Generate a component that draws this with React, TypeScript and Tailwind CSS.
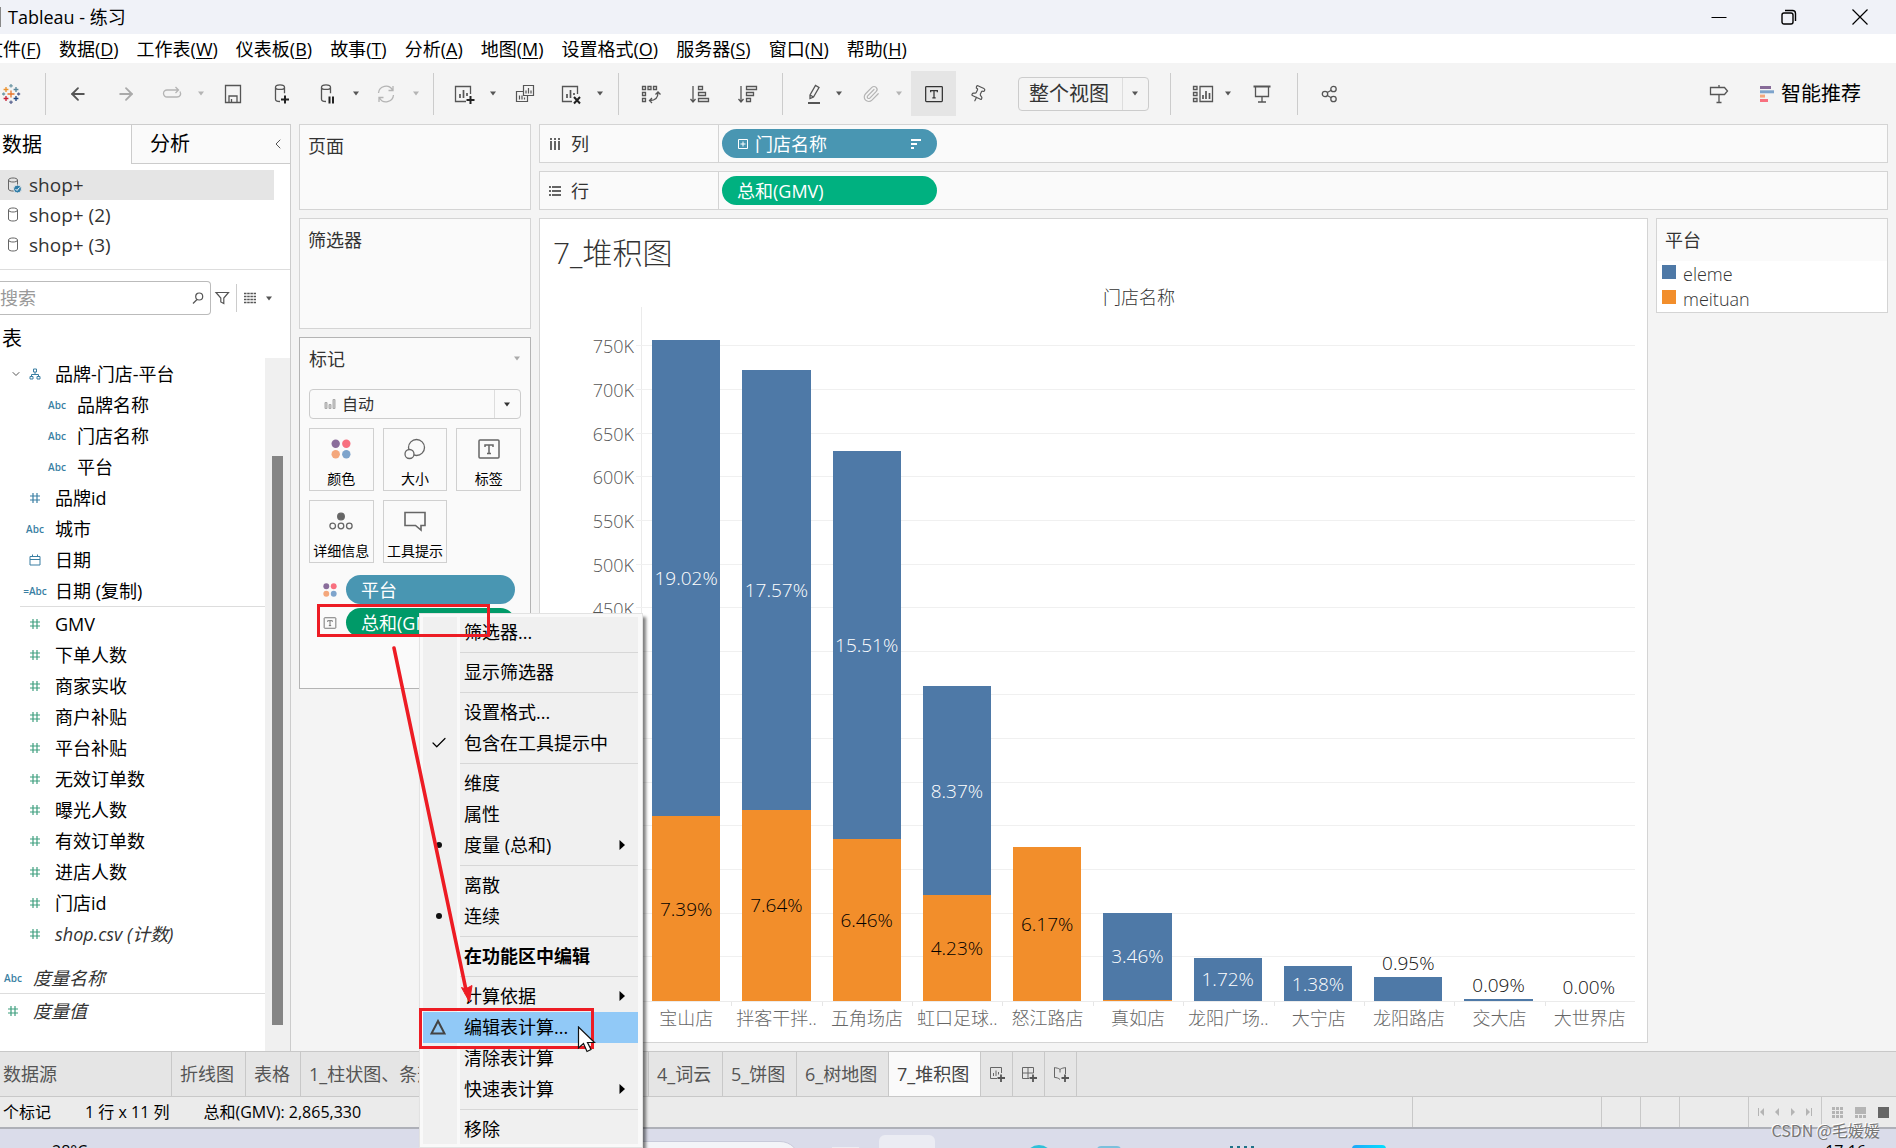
import type { ReactNode } from 'react';
import { ArrowLeft, ArrowRight, Check, ChevronDown, ChevronLeft, Paperclip, Pin } from 'lucide-react';

const BLUE = '#4e79a7';
const ORANGE = '#f28e2b';

/* ---------- data ---------- */

const MENUS = [
    ['文件', 'F'], ['数据', 'D'], ['工作表', 'W'], ['仪表板', 'B'], ['故事', 'T'], ['分析', 'A'],
    ['地图', 'M'], ['设置格式', 'O'], ['服务器', 'S'], ['窗口', 'N'], ['帮助', 'H'],
];

const DIMENSIONS = [
    { icon: 'abc', name: '品牌名称', nested: true },
    { icon: 'abc', name: '门店名称', nested: true },
    { icon: 'abc', name: '平台', nested: true },
    { icon: 'hash', name: '品牌id' },
    { icon: 'abc', name: '城市' },
    { icon: 'date', name: '日期' },
    { icon: 'calc', name: '日期 (复制)' },
];

const MEASURES = [
    'GMV', '下单人数', '商家实收', '商户补贴', '平台补贴', '无效订单数', '曝光人数', '有效订单数', '进店人数', '门店id',
];

// share of total GMV per store, in percent
const STORES = [
    { name: '宝山店', eleme: 19.02, meituan: 7.39 },
    { name: '拌客干拌..', eleme: 17.57, meituan: 7.64 },
    { name: '五角场店', eleme: 15.51, meituan: 6.46 },
    { name: '虹口足球..', eleme: 8.37, meituan: 4.23 },
    { name: '怒江路店', eleme: 0, meituan: 6.17 },
    { name: '真如店', eleme: 3.46, meituan: 0.05 },
    { name: '龙阳广场..', eleme: 1.72, meituan: 0 },
    { name: '大宁店', eleme: 1.38, meituan: 0 },
    { name: '龙阳路店', eleme: 0.95, meituan: 0 },
    { name: '交大店', eleme: 0.09, meituan: 0 },
    { name: '大世界店', eleme: 0, meituan: 0 },
];

const AXIS_MAX = 795; // thousands
const TOTAL = 2865.33;
const TICKS = [50, 100, 150, 200, 250, 300, 350, 400, 450, 500, 550, 600, 650, 700, 750];

const toHeight = (pct: number) => `${((pct / 100) * TOTAL * 100) / AXIS_MAX}%`;

type MenuRow = { label: string; mark?: 'check' | 'dot' | 'delta'; sub?: boolean; bold?: boolean; active?: boolean };

const CONTEXT_MENU: MenuRow[][] = [
    [{ label: '筛选器...' }],
    [{ label: '显示筛选器' }],
    [{ label: '设置格式...' }, { label: '包含在工具提示中', mark: 'check' }],
    [{ label: '维度' }, { label: '属性' }, { label: '度量 (总和)', mark: 'dot', sub: true }],
    [{ label: '离散' }, { label: '连续', mark: 'dot' }],
    [{ label: '在功能区中编辑', bold: true }],
    [
        { label: '计算依据', sub: true },
        { label: '编辑表计算...', mark: 'delta', active: true },
        { label: '清除表计算' },
        { label: '快速表计算', sub: true },
    ],
    [{ label: '移除' }],
];

/* ---------- icons ---------- */

function Caret({ className = '' }: { className?: string }) {
    return (
        <svg viewBox="0 0 8 5" className={`w-2 h-[5px] shrink-0 ${className}`}>
            <path d="M1 0.5h6L4 4.5z" fill="currentColor" />
        </svg>
    );
}

function Glyph({ children, className = '' }: { children: ReactNode; className?: string }) {
    return (
        <svg viewBox="0 0 24 24" fill="none" stroke="currentColor" strokeWidth="1.3" className={`w-6 h-6 shrink-0 ${className}`}>
            {children}
        </svg>
    );
}

function Logo() {
    const plus = (x: number, y: number, r: number, color: string) => (
        <path key={`${x}-${y}`} d={`M${x - r} ${y}h${2 * r}M${x} ${y - r}v${2 * r}`} stroke={color} />
    );
    return (
        <Glyph>
            {plus(12, 12, 3.5, '#e8762b')}
            {plus(7, 7.5, 2.4, '#eb912c')}
            {plus(17, 7.5, 2.4, '#59879b')}
            {plus(7, 16.5, 2.4, '#c72035')}
            {plus(17, 16.5, 2.4, '#1f447e')}
            {plus(12, 3.8, 1.8, '#7099a6')}
            {plus(12, 20.2, 1.8, '#5b6591')}
            {plus(4.6, 12, 1.6, '#7099a6')}
            {plus(19.6, 12, 1.6, '#5b6591')}
        </Glyph>
    );
}

function HashIcon({ className = '' }: { className?: string }) {
    return (
        <svg viewBox="0 0 12 12" fill="none" stroke="currentColor" strokeWidth="1.2" className={`w-3 h-3 ${className}`}>
            <path d="M4 1v10M8 1v10M1 4h10M1 8h10" />
        </svg>
    );
}

function Cylinder() {
    return <path d="M6.500 5.200c0-3 9-3 9 0s-9 3-9 0v12c0 1.500 2 2.300 4.500 2.300M15.500 5.200v6" />;
}

function DataSourceIcon({ active }: { active?: boolean }) {
    return (
        <svg viewBox="0 0 16 18" fill="none" stroke="#666" className="w-4 h-[18px] shrink-0">
            <path d="M2.500 4c0-2.700 9-2.700 9 0s-9 2.700-9 0v9c0 2.700 9 2.700 9 0V4" />
            {active && (
                <>
                    <circle cx="11.500" cy="13" r="4" fill="#2f7da8" stroke="#e5e5e5" />
                    <path d="M9.500 13l1.500 1.500 2.500-3" stroke="#fff" />
                </>
            )}
        </svg>
    );
}

function ColorDots({ className = '' }: { className?: string }) {
    return (
        <svg viewBox="0 0 20 20" className={className}>
            <circle cx="4.700" cy="4.700" r="4.200" fill="#8a6d9b" />
            <circle cx="15.300" cy="4.700" r="4.200" fill="#f8707f" />
            <circle cx="4.700" cy="15.300" r="4.200" fill="#f4a77c" />
            <circle cx="15.300" cy="15.300" r="4.200" fill="#7ea4cc" />
        </svg>
    );
}

function LabelIcon({ className = '' }: { className?: string }) {
    return (
        <svg viewBox="0 0 24 24" fill="none" stroke="currentColor" strokeWidth="1.500" className={className}>
            <rect x="2" y="3" width="20" height="18" rx="1" />
            <path d="M8 10V8h8v2M12 8v8.500M10 16.500h4" />
        </svg>
    );
}

/* ---------- top bars ---------- */

function TitleBar() {
    return (
        <header className="h-[34px] shrink-0 bg-[#f0f2f8] flex items-center justify-between text-lg text-black">
            <div className="flex items-center gap-[7px]">
                <span className="w-px h-5 bg-[#888]" />
                <h1>Tableau - 练习</h1>
            </div>
            <div className="flex h-full">
                <button aria-label="最小化" className="w-[70px] flex items-center justify-center">
                    <svg viewBox="0 0 16 16" className="w-4 h-4" stroke="#000"><path d="M0.500 8.500h15" /></svg>
                </button>
                <button aria-label="还原" className="w-[70px] flex items-center justify-center">
                    <svg viewBox="0 0 16 16" className="w-4 h-4" fill="none" stroke="#000" strokeWidth="1.400">
                        <rect x="1" y="4" width="11" height="11" rx="2" />
                        <path d="M4 1.500h7.500a3 3 0 0 1 3 3V12" />
                    </svg>
                </button>
                <button aria-label="关闭" className="w-[72px] flex items-center justify-center">
                    <svg viewBox="0 0 16 16" className="w-4 h-4" stroke="#000" strokeWidth="1.200"><path d="M0.500 0.500l15 15M15.500 0.500l-15 15" /></svg>
                </button>
            </div>
        </header>
    );
}

function MenuBar() {
    return (
        <nav className="h-[29px] shrink-0 bg-white overflow-hidden">
            <ul className="flex items-center gap-[18px] h-full -ml-[15px] text-lg text-black whitespace-nowrap">
                {MENUS.map(([name, key]) => (
                    <li key={key}>
                        <button>
                            {name}(<u className="underline-offset-2">{key}</u>)
                        </button>
                    </li>
                ))}
            </ul>
        </nav>
    );
}

const Sep = ({ className }: { className: string }) => <span className={`w-px h-[42px] shrink-0 bg-[#ccc] ${className}`} />;

function Tool({ label, className = '', children }: { label: string; className?: string; children: ReactNode }) {
    return <button aria-label={label} className={`shrink-0 ${className}`}>{children}</button>;
}

function Toolbar() {
    return (
        <div className="h-[61px] shrink-0 flex items-center text-[#555]">
            <Tool label="开始页面" className="-ml-px"><Logo /></Tool>
            <Sep className="ml-[22px]" />
            <Tool label="撤消" className="ml-5"><ArrowLeft className="w-6 h-5" strokeWidth={2.2} /></Tool>
            <Tool label="重做" className="ml-6 text-[#aaa]"><ArrowRight className="w-6 h-5" strokeWidth={2.2} /></Tool>
            <Tool label="重复" className="ml-[22px] text-[#b4b4b4]">
                <Glyph><path d="M9 15H7a3.500 3.500 0 0 1 0-7h11M15.500 5l3 3-3 3M20 9.500c1.500 3 0 5.500-3 5.500H9" /></Glyph>
            </Tool>
            <Caret className="ml-[13px] text-[#b4b4b4]" />
            <Tool label="保存" className="ml-4">
                <Glyph><path d="M4.500 3.500h15v17h-15zM8 20v-6h8v6M10.500 17v3" /></Glyph>
            </Tool>
            <Tool label="新建数据源" className="ml-6">
                <Glyph><Cylinder /><path d="M12 17.500h8M16 13.500v8" stroke="#222" strokeWidth="2" /></Glyph>
            </Tool>
            <Tool label="暂停自动更新" className="ml-[22px]">
                <Glyph><Cylinder /><path d="M14.500 14.500v7M18 14.500v7" stroke="#222" strokeWidth="2" /></Glyph>
            </Tool>
            <Caret className="ml-[13px]" />
            <Tool label="刷新" className="ml-3.5 text-[#b4b4b4]">
                <Glyph><path d="M4.500 11a7.500 7.500 0 0 1 14-3M19.500 13a7.500 7.500 0 0 1-14 3M19 4v4.500h-4.500M5 20v-4.500h4.500" /></Glyph>
            </Tool>
            <Caret className="ml-3.5 text-[#b4b4b4]" />
            <Sep className="ml-[13px]" />
            <Tool label="新建工作表" className="ml-[18px]">
                <Glyph><path d="M18.500 12V4.500h-15v15H14" /><path d="M8 16v-4M11.500 16V8M15 14v-3" strokeWidth="1.700" /><path d="M14.500 18h8M18.500 14v8" stroke="#222" strokeWidth="2" /></Glyph>
            </Tool>
            <Caret className="ml-[13px]" />
            <Tool label="复制工作表" className="ml-4">
                <Glyph><path d="M10.500 3.500h10v10h-10zM10 9.500H3.500v10h11V14M13 11.500v-3M15.500 11.500V6M18 11.500v-3M6.500 17.500v-4M9 17.500v-4M11.500 17.500v-2" strokeWidth="1.200" /></Glyph>
            </Tool>
            <Tool label="清除工作表" className="ml-[22px]">
                <Glyph><path d="M18.500 12V4.500h-15v15H13" /><path d="M8 16v-4M11.500 16V8M15 13v-2" strokeWidth="1.700" /><path d="M15 15l6 6.500M21 15l-6 6.500" stroke="#222" strokeWidth="2" /></Glyph>
            </Tool>
            <Caret className="ml-[13px]" />
            <Sep className="ml-3.5" />
            <Tool label="交换行和列" className="ml-5">
                <Glyph><path d="M3.500 4.500h3v3h-3zM9 4.500h3v3H9zM14.500 4.500h3v3h-3zM3.500 10.500h3v3h-3zM3.500 16.500h3v3h-3zM11 18.500c6 0 8-3 8-8M16.500 12.500l2.500-2.500 2.500 2.500M13 16l-2.500 2.500L13 21" /></Glyph>
            </Tool>
            <Tool label="升序排序" className="ml-[25px]">
                <Glyph><path d="M5 4v16M2.500 17L5 20l2.500-3M10.500 4.500h4v3h-4zM10.500 10.500h7v3h-7zM10.500 16.500h10v3h-10z" /></Glyph>
            </Tool>
            <Tool label="降序排序" className="ml-6">
                <Glyph><path d="M5 4v16M2.500 17L5 20l2.500-3M10.500 4.500h10v3h-10zM10.500 10.500h7v3h-7zM10.500 16.500h4v3h-4z" /></Glyph>
            </Tool>
            <Sep className="ml-[22px]" />
            <Tool label="突出显示" className="ml-[19px]">
                <Glyph><path d="M8 13l5.500-9.500 3.500 2L11.500 15 8 16.500zM8 13l3.500 2" /><path d="M6 21h12" strokeWidth="2" /></Glyph>
            </Tool>
            <Caret className="ml-[9px]" />
            <Tool label="组成员" className="ml-4 text-[#b4b4b4]"><Paperclip className="w-6 h-[18px]" strokeWidth={1.6} /></Tool>
            <Caret className="ml-3 text-[#b4b4b4]" />
            <Tool label="显示标记标签" className="ml-2 w-[45px] h-[45px] flex items-center justify-center bg-[#e5e5e5] text-[#333]">
                <LabelIcon className="w-5 h-5" />
            </Tool>
            <Tool label="固定" className="ml-2.5"><Pin className="w-6 h-[18px] rotate-[25deg]" strokeWidth={1.6} /></Tool>
            <label className="relative ml-7 flex items-center">
                <select aria-label="适合" className="appearance-none w-[131px] h-[34px] pl-2.5 rounded-sm border border-[#ccc] bg-[#f4f4f4] text-xl leading-6 text-[#333]">
                    <option>整个视图</option>
                </select>
                <span className="absolute right-[26px] top-px bottom-px w-px bg-[#ddd]" />
                <Caret className="absolute right-2.5" />
            </label>
            <Sep className="ml-[21px]" />
            <Tool label="显示/隐藏卡" className="ml-5">
                <Glyph><path d="M2.500 4.500h3.500v3H2.500zM2.500 10.500h3.500v3H2.500zM2.500 16.500h3.500v3H2.500zM9 4.500h12.500v15H9z" /><path d="M12 17v-4M15 17V9M18.500 17v-6" strokeWidth="1.700" /></Glyph>
            </Tool>
            <Caret className="ml-[9px]" />
            <Tool label="演示模式" className="ml-[18px]">
                <Glyph><path d="M5.500 5v9.500h13V5M12 14.500v5M8 20h8" /><path d="M3.500 4.500h17" strokeWidth="2" /></Glyph>
            </Tool>
            <Sep className="ml-[23px]" />
            <Tool label="共享" className="ml-5">
                <Glyph><circle cx="7" cy="12" r="2.700" /><circle cx="15.500" cy="7" r="2.700" /><circle cx="15.500" cy="17" r="2.700" /><path d="M9.300 10.500l4-2.200M9.300 13.500l4 2.200" /></Glyph>
            </Tool>
            <div className="ml-auto mr-[35px] flex items-center gap-[29px]">
                <Tool label="数据指南">
                    <Glyph><path d="M12 3v2M3.500 5.500h14l3 3.500-3 3.500h-14zM12 12.500v8M9.500 20.500h5" /></Glyph>
                </Tool>
                <button className="flex items-center gap-[7px] text-xl text-black whitespace-nowrap">
                    <svg viewBox="0 0 14 16" className="w-3.5 h-4">
                        <path d="M0 0h11v3H0z" fill="#876b98" />
                        <path d="M0 4.300h14v3H0z" fill="#7ea4cc" />
                        <path d="M0 8.600h5v3H0z" fill="#f4a77c" />
                        <path d="M0 13h8v3H0z" fill="#f8707f" />
                    </svg>
                    智能推荐
                </button>
            </div>
        </div>
    );
}

/* ---------- data pane ---------- */

function FieldIcon({ type }: { type: string }) {
    if (type === 'hash') return <HashIcon />;
    if (type === 'date') {
        return (
            <svg viewBox="0 0 12 12" fill="none" stroke="currentColor" className="w-3 h-3">
                <path d="M1 2.500h10v8.500H1zM1 5.500h10M3.500 0.500v2M8.500 0.500v2" />
            </svg>
        );
    }
    return <span className="text-[10px] font-semibold">{type === 'calc' ? '=Abc' : 'Abc'}</span>;
}

function Field({ icon, name, nested, indent = true, measure, italic }: {
    icon: string; name: string; nested?: boolean; indent?: boolean; measure?: boolean; italic?: boolean;
}) {
    const pad = nested ? 'pl-[45px]' : indent ? 'pl-[23px]' : 'pl-px';
    return (
        <li className={`h-[31px] flex items-center gap-2 ${pad}`}>
            <span className={`w-6 flex justify-center ${measure ? 'text-[#3f9f7f]' : 'text-[#3a7fa3]'}`}>
                <FieldIcon type={icon} />
            </span>
            <span className={italic ? 'italic text-[#333]' : ''}>{name}</span>
        </li>
    );
}

function DataPane() {
    return (
        <aside className="w-[291px] shrink-0 flex flex-col bg-white border-r border-t border-[#ccc] text-lg leading-6 text-black">
            <div className="flex h-[39px] shrink-0 text-xl">
                <button className="w-[131px] pl-0.5 text-left">数据</button>
                <button className="flex-1 flex items-center justify-between pl-[18px] pr-1 border-l border-b border-[#ccc] bg-[#fafafa]">
                    分析
                    <ChevronLeft className="w-4 h-4 text-[#555]" strokeWidth={1.5} />
                </button>
            </div>
            <ul className="pt-1.5 pb-[9px] border-b border-[#ddd] text-[19px] text-[#333]">
                {['shop+', 'shop+ (2)', 'shop+ (3)'].map((name, i) => (
                    <li key={name} className={`h-[30px] mr-4 flex items-center gap-[7px] pl-1.5 ${i === 0 ? 'bg-[#e5e5e5]' : ''}`}>
                        <DataSourceIcon active={i === 0} />
                        {name}
                    </li>
                ))}
            </ul>
            <div className="flex items-center mt-[11px] h-[34px] shrink-0 text-[#555]">
                <label className="relative flex items-center w-[211px]">
                    <input
                        aria-label="搜索"
                        placeholder="搜索"
                        className="w-full h-[34px] rounded-r-sm border border-l-0 border-[#bbb] placeholder:text-[#999]"
                    />
                    <svg viewBox="0 0 12 12" fill="none" stroke="currentColor" strokeWidth="1.200" className="absolute right-[7px] w-3 h-3">
                        <circle cx="7.200" cy="4.500" r="3.500" />
                        <path d="M5 7.500L1 11.500" />
                    </svg>
                </label>
                <button aria-label="筛选" className="ml-[3px]">
                    <svg viewBox="0 0 16 16" fill="none" stroke="currentColor" strokeWidth="1.200" className="w-4 h-4">
                        <path d="M2 2.500h12.500L9.800 8v5.500l-3-1.500V8z" />
                    </svg>
                </button>
                <span className="w-px h-7 ml-1.5 bg-[#ccc]" />
                <button aria-label="视图" className="ml-[7px] flex items-center gap-[9px]">
                    <svg viewBox="0 0 12 12" stroke="currentColor" strokeWidth="1.300" strokeDasharray="2.500 0.700" className="w-3 h-3">
                        <path d="M0 1.500h12M0 4.500h12M0 7.500h12M0 10.500h12" />
                    </svg>
                    <Caret />
                </button>
            </div>
            <h2 className="h-[43px] shrink-0 pt-3 pl-0.5 text-xl leading-6">表</h2>
            <div className="flex flex-1 min-h-0">
                <div className="flex-1">
                    <ul>
                        <li className="h-[31px] flex items-center pl-2.5">
                            <ChevronDown className="w-3 h-3 text-[#555]" strokeWidth={2} />
                            <svg viewBox="0 0 12 12" fill="none" stroke="#3a7fa3" className="w-3 h-3 ml-[7px]">
                                <path d="M4.500 1h3v3h-3zM1 8.500h3v2.500H1zM8 8.500h3v2.500H8zM6 4v2.500M2.500 8.500v-2h7v2" />
                            </svg>
                            <span className="ml-3.5">品牌-门店-平台</span>
                        </li>
                        {DIMENSIONS.map((field) => <Field key={field.name} {...field} />)}
                    </ul>
                    <hr className="ml-5 mb-px border-[#ddd]" />
                    <ul className="mb-[13px]">
                        {MEASURES.map((name) => <Field key={name} icon="hash" name={name} measure />)}
                        <Field icon="hash" name="shop.csv (计数)" measure italic />
                    </ul>
                    <ul>
                        <Field icon="abc" name="度量名称" indent={false} italic />
                        <li><hr className="mb-px border-[#ddd]" /></li>
                        <Field icon="hash" name="度量值" indent={false} measure italic />
                    </ul>
                </div>
                <div className="w-[25px] bg-[#f0f0f0] pt-[98px] pb-[26px] pl-[7px]">
                    <div className="w-[11px] h-full bg-[#858585]" />
                </div>
            </div>
        </aside>
    );
}

/* ---------- cards ---------- */

function MarkButton({ label, children }: { label: string; children: ReactNode }) {
    return (
        <button className="h-[63px] flex flex-col items-center justify-between pt-2 pb-0.5 border border-[#d0d0d0] text-sm leading-[18px] text-black whitespace-nowrap">
            <span className="h-6 flex items-center text-[#666]">{children}</span>
            {label}
        </button>
    );
}

function CardColumn() {
    return (
        <section className="w-[232px] shrink-0 flex flex-col gap-2 text-lg leading-6 text-[#333]">
            <div className="h-[86px] bg-[#fafafa] border border-[#d4d4d4] pt-[9px] pl-2">页面</div>
            <div className="h-[111px] bg-[#fafafa] border border-[#d4d4d4] pt-[9px] pl-2">筛选器</div>
            <div className="h-[352px] bg-[#fafafa] border border-[#b4b4b4] px-[9px]">
                <div className="h-[51px] flex items-center justify-between pb-2.5">
                    标记
                    <Caret className="text-[#aaa]" />
                </div>
                <label className="relative flex items-center">
                    <select aria-label="标记类型" className="appearance-none w-full h-[30px] pl-8 rounded-sm border border-[#ccc] text-base leading-5">
                        <option>自动</option>
                    </select>
                    <svg viewBox="0 0 12 12" fill="none" stroke="#aaa" className="absolute left-[15px] w-3 h-3">
                        <path d="M1 4.500h2v6H1zM5 6.500h2v4H5zM9 1.500h2v9H9z" fill="#ccc" />
                    </svg>
                    <span className="absolute right-[26px] top-px bottom-px w-px bg-[#ddd]" />
                    <Caret className="absolute right-2.5" />
                </label>
                <div className="mt-[9px] grid grid-cols-3 gap-[9px]">
                    <MarkButton label="颜色"><ColorDots className="w-5 h-5" /></MarkButton>
                    <MarkButton label="大小">
                        <Glyph><circle cx="13.500" cy="10.500" r="8" /><circle cx="6.500" cy="17" r="4.500" fill="#fafafa" /></Glyph>
                    </MarkButton>
                    <MarkButton label="标签"><LabelIcon className="w-6 h-6" /></MarkButton>
                    <MarkButton label="详细信息">
                        <Glyph>
                            <circle cx="12" cy="7.500" r="3.300" fill="#666" />
                            <circle cx="3.700" cy="17" r="2.800" /><circle cx="12" cy="17" r="2.800" /><circle cx="20.300" cy="17" r="2.800" />
                        </Glyph>
                    </MarkButton>
                    <MarkButton label="工具提示">
                        <Glyph><path d="M2 3.500h20v13h-4V21l-5.500-4.500H2z" strokeWidth="1.600" /></Glyph>
                    </MarkButton>
                </div>
                <ul className="mt-3 flex flex-col gap-1 pl-3.5 pr-1.5 text-white">
                    <li className="flex items-center gap-[9px]">
                        <ColorDots className="w-3.5 h-3.5" />
                        <span className="flex-1 h-[29px] flex items-center pl-[15px] rounded-full bg-[#4996b2]">平台</span>
                    </li>
                    <li className="flex items-center gap-[9px]">
                        <LabelIcon className="w-3.5 h-3.5 text-[#666]" />
                        <span className="flex-1 h-[29px] flex items-center pl-[15px] rounded-full bg-[#009a68]">总和(GMV)</span>
                    </li>
                </ul>
            </div>
        </section>
    );
}

function Shelf({ icon, label, children }: { icon: ReactNode; label: string; children: ReactNode }) {
    return (
        <div className="h-[39px] shrink-0 flex bg-[#fafafa] border border-[#d4d4d4] text-lg leading-6 text-[#333]">
            <div className="w-[179px] flex items-center gap-2.5 pl-[9px] border-r border-[#d4d4d4]">
                {icon}
                {label}
            </div>
            <div className="pl-[3px] flex items-center text-white">{children}</div>
        </div>
    );
}

/* ---------- worksheet ---------- */

function StoreColumn({ eleme, meituan }: { eleme: number; meituan: number }) {
    const outside = eleme < 1 && meituan < 1;
    return (
        <div className="relative flex-1 flex flex-col justify-end pl-2.5 pr-3 text-[19px] leading-6 font-light">
            {outside && <span className="self-center pb-0.5 text-[#111]">{eleme.toFixed(2)}%</span>}
            <div className="shrink-0 flex items-center justify-center text-white" style={{ height: toHeight(eleme), background: BLUE }}>
                {eleme >= 1 && `${eleme.toFixed(2)}%`}
            </div>
            <div className="shrink-0 flex items-center justify-center text-black" style={{ height: toHeight(meituan), background: ORANGE }}>
                {meituan >= 1 && `${meituan.toFixed(2)}%`}
            </div>
        </div>
    );
}

function Worksheet() {
    return (
        <main className="flex-1 flex flex-col bg-white border border-[#d4d4d4] pr-3">
            <h2 className="h-[60px] pt-4 pl-[13px] text-[30px] leading-9 font-light text-[#333]">7_堆积图</h2>
            <p className="h-7 pl-[103px] pt-1.5 text-center text-lg leading-6 font-light text-[#333]">门店名称</p>
            <div className="flex-1 flex">
                <div className="relative w-[101px] shrink-0 text-lg leading-6 font-light text-[#555]">
                    {TICKS.map((tick) => (
                        <span key={tick} className="absolute right-[7px] translate-y-1/2" style={{ bottom: `${(tick / AXIS_MAX) * 100}%` }}>
                            {tick}K
                        </span>
                    ))}
                </div>
                <div className="relative flex-1 flex border-l border-b border-[#ebebeb]">
                    {TICKS.map((tick) => (
                        <span key={tick} className="absolute -left-1.5 right-0 h-px bg-[#f0f0f0]" style={{ bottom: `${(tick / AXIS_MAX) * 100}%` }} />
                    ))}
                    {STORES.map((store) => <StoreColumn key={store.name} eleme={store.eleme} meituan={store.meituan} />)}
                </div>
            </div>
            <div className="h-10 flex pl-[101px] text-lg leading-6 font-light text-[#666]">
                {STORES.map((store) => (
                    <div key={store.name} className="flex-1 basis-0 flex flex-col items-center whitespace-nowrap">
                        <span className="self-start w-px h-1 bg-[#e6e6e6]" />
                        {store.name}
                    </div>
                ))}
            </div>
        </main>
    );
}

function Legend() {
    return (
        <aside className="w-[232px] h-[95px] shrink-0 bg-white border border-[#d4d4d4] text-lg leading-6 text-[#333]">
            <h3 className="h-[42px] pt-[9px] pl-2 bg-[#fafafa]">平台</h3>
            <ul className="pl-[5px] font-light">
                <li className="h-[25px] flex items-center gap-[7px]">
                    <span className="w-3.5 h-3.5 mb-1" style={{ background: BLUE }} />eleme
                </li>
                <li className="h-[25px] flex items-center gap-[7px]">
                    <span className="w-3.5 h-3.5 mb-1" style={{ background: ORANGE }} />meituan
                </li>
            </ul>
        </aside>
    );
}

/* ---------- bottom bars ---------- */

function AddTab({ label, children }: { label: string; children: ReactNode }) {
    return (
        <button aria-label={label} className="w-8 flex items-center justify-center border-r border-[#c8c8c8]">
            <svg viewBox="0 0 16 16" fill="none" stroke="#666" className="w-4 h-4">
                {children}
                <path d="M8.500 12h7.500M12 8.500V16" stroke="#555" strokeWidth="1.800" />
            </svg>
        </button>
    );
}

function SheetTabs() {
    const tab = 'shrink-0 border-r border-[#c8c8c8] text-left overflow-hidden';
    return (
        <div className="h-[46px] shrink-0 flex bg-[#e5e5e5] border-t border-b border-[#c8c8c8] text-lg text-[#555] whitespace-nowrap">
            <button className={`${tab} w-[172px] pl-[3px]`}>数据源</button>
            <button className={`${tab} w-[74px] pl-2`}>折线图</button>
            <button className={`${tab} w-[55px] pl-2`}>表格</button>
            <button className={`${tab} w-[348px] pl-2`}>1_柱状图、条形图</button>
            <button className={`${tab} w-[74px] pl-2`}>4_词云</button>
            <button className={`${tab} w-[74px] pl-2`}>5_饼图</button>
            <button className={`${tab} w-[92px] pl-2`}>6_树地图</button>
            <button className={`${tab} w-[92px] pl-2 bg-[#fafafa] text-[#444]`}>7_堆积图</button>
            <AddTab label="新建工作表"><path d="M12.500 7V1.500h-11v11H8M4.500 10V7M7 10V4.500M9.500 8.500V6" /></AddTab>
            <AddTab label="新建仪表板"><path d="M12.500 7V1.500h-11v11H8M1.500 7h11M7 1.500v11" /></AddTab>
            <AddTab label="新建故事"><path d="M7 3.500C5.500 2 3 2 1.500 1.500v10c2 0 4 .5 5.500 2M7 3.500C8.500 2 11 2 12.500 1.500V8M7 3.500v3" /></AddTab>
        </div>
    );
}

function StatusBar() {
    const cell = 'border-l border-[#c8c8c8]';
    return (
        <footer className="h-8 shrink-0 flex bg-[#ebebeb] border-b-2 border-[#aeb0b8] text-base text-black whitespace-nowrap">
            <div className="flex-1 flex items-center gap-[34px] pl-[3px]">
                <span>个标记</span>
                <span>1 行 x 11 列</span>
                <span>总和(GMV): 2,865,330</span>
            </div>
            <div className={`${cell} w-[189px]`} />
            <div className={`${cell} w-[39px]`} />
            <div className={`${cell} w-[39px]`} />
            <div className={`${cell} w-[69px]`} />
            <div className={`${cell} w-[73px] flex items-center justify-center gap-2 text-[#b4b4b4]`}>
                <svg viewBox="0 0 8 8" className="w-2 h-2"><path d="M1 0h1v8H1zM7 0v8L3 4z" fill="currentColor" /></svg>
                <svg viewBox="0 0 8 8" className="w-2 h-2"><path d="M6 0v8L2 4z" fill="currentColor" /></svg>
                <svg viewBox="0 0 8 8" className="w-2 h-2"><path d="M2 0v8l4-4z" fill="currentColor" /></svg>
                <svg viewBox="0 0 8 8" className="w-2 h-2"><path d="M1 0v8l4-4zM6 0h1v8H6z" fill="currentColor" /></svg>
            </div>
            <div className={`${cell} w-[75px] flex items-center gap-3 pl-2.5 text-[#b4b4b4]`}>
                <svg viewBox="0 0 11 11" className="w-[11px] h-[11px]">
                    <path d="M0 0h3v3H0zM4 0h3v3H4zM8 0h3v3H8zM0 4h3v3H0zM4 4h3v3H4zM8 4h3v3H8zM0 8h3v3H0zM4 8h3v3H4zM8 8h3v3H8z" fill="currentColor" />
                </svg>
                <svg viewBox="0 0 11 11" className="w-[11px] h-[11px]"><path d="M0 0h11v7H0zM0 8h3v3H0zM4 8h3v3H4zM8 8h3v3H8z" fill="currentColor" /></svg>
                <span className="w-[11px] h-[11px] bg-[#666]" />
            </div>
        </footer>
    );
}

// only the top edge of the desktop taskbar is in view
function Taskbar() {
    return (
        <div className="h-[19px] shrink-0 flex items-start overflow-hidden bg-[#dadcea] text-base leading-5 text-black">
            <span className="w-[420px] pl-[52px] pt-3">28°C</span>
            <span className="w-[380px] h-10 mt-3 rounded-full border border-[#c8cada] bg-[#f3f4f8]" />
            <span className="w-[27px] h-4 ml-8 mt-[18px] bg-[#ececf2]" />
            <span className="w-14 h-10 ml-5 mt-1.5 rounded-md bg-[#ebecf3]" />
            <span className="w-7 h-7 ml-[90px] mt-4 rounded-full bg-[#2fc0d8]" />
            <span className="w-6 h-6 ml-11 mt-[17px] rounded-sm bg-[#7cc0dc]" />
            <span className="flex gap-1 ml-[109px] mt-[17px]">
                {[0, 1, 2, 3].map((i) => <i key={i} className="w-[3px] h-3 bg-[#1f7288]" />)}
            </span>
            <span className="w-[34px] h-8 ml-[98px] mt-4 rounded-sm bg-gradient-to-r from-[#1ea7f8] to-[#00e0ff]" />
            <span className="ml-auto mr-[30px] pt-3">17:16</span>
        </div>
    );
}

/* ---------- overlays ---------- */

function ContextMenu() {
    return (
        <div role="menu" className="absolute left-[419px] top-[613px] w-[224px] h-[535px] p-[3px] pr-1 bg-[#f9f9f9] border border-[#e2e2e2] shadow-[3px_4px_3px_rgba(0,0,0,0.5)] text-lg leading-6 text-black">
            <div className="h-full bg-[linear-gradient(to_right,#f0f0f0_34px,#f9f9f9_34px,#f9f9f9_37px,#f0f0f0_37px)]">
                {CONTEXT_MENU.map((group, i) => (
                    <div key={i}>
                        {i > 0 && <hr className="ml-[37px] my-1 border-[#d7d7d7]" />}
                        {group.map((row) => (
                            <button
                                key={row.label}
                                role="menuitem"
                                className={`w-full h-[31px] flex items-center pb-px pr-[13px] ${row.bold ? 'font-bold' : ''} ${row.active ? 'bg-[#91c9f7]' : ''}`}
                            >
                                <span className="w-[41px] pl-[7px] flex">
                                    {row.mark === 'check' && <Check className="w-[18px] h-[18px]" strokeWidth={1.6} />}
                                    {row.mark === 'dot' && <i className="w-1.5 h-1.5 ml-1.5 rounded-full bg-[#111]" />}
                                    {row.mark === 'delta' && (
                                        <svg viewBox="0 0 16 16" fill="none" stroke="#444" strokeWidth="2" className="w-4 h-4"><path d="M8 2l6.500 12.500h-13z" /></svg>
                                    )}
                                </span>
                                {row.label}
                                {row.sub && (
                                    <svg viewBox="0 0 6 10" className="w-1.5 h-2.5 ml-auto"><path d="M0.500 0v10L6 5z" /></svg>
                                )}
                            </button>
                        ))}
                    </div>
                ))}
            </div>
        </div>
    );
}

function Annotations() {
    return (
        <>
            <div className="absolute left-[317px] top-[604px] w-[173px] h-[33px] border-3 border-[#ed1c24] pointer-events-none" />
            <div className="absolute left-[419px] top-[1008px] w-[175px] h-[41px] border-3 border-[#ed1c24] pointer-events-none" />
            <svg viewBox="0 0 100 370" className="absolute left-[384px] top-[640px] w-[100px] h-[370px] pointer-events-none">
                <path d="M10 8L82 350" stroke="#ed1c24" strokeWidth="3.600" strokeLinecap="round" />
                <path d="M85.500 362L77.500 347.500l4 1.500 6.500-3.500z" fill="#ed1c24" stroke="#ed1c24" strokeWidth="1" />
            </svg>
            <svg viewBox="0 0 20 28" className="absolute left-[577px] top-[1026px] w-5 h-7 pointer-events-none">
                <path d="M1.500 1v21l5-4.500 3.500 8 4-2-3.500-7h7z" fill="#fff" stroke="#111" strokeWidth="1.200" />
            </svg>
            <span className="absolute right-4 bottom-1.5 text-base leading-6 font-['Noto_Sans_CJK_SC',sans-serif] text-[#777] [text-shadow:-1px_-1px_0_#fff]">
                CSDN @毛媛媛
            </span>
        </>
    );
}

export default function App() {
    return (
        <div
            lang="zh-CN"
            className="relative h-screen overflow-hidden flex flex-col bg-[#f4f4f4] font-['Open_Sans','Noto_Sans_CJK_SC',sans-serif]"
        >
            <TitleBar />
            <MenuBar />
            <Toolbar />
            <div className="flex-1 min-h-0 flex">
                <DataPane />
                <div className="flex-1 flex gap-2 pl-2 pr-2 pb-2">
                    <CardColumn />
                    <div className="flex-1 min-w-0 flex flex-col gap-2">
                        <Shelf
                            label="列"
                            icon={
                                <svg viewBox="0 0 12 12" stroke="currentColor" strokeWidth="1.500" className="w-3 h-3">
                                    <path d="M2 0v2M6 0v2M10 0v2M2 3v9M6 3v9M10 3v9" />
                                </svg>
                            }
                        >
                            <span className="w-[215px] h-[29px] flex items-center gap-[7px] px-4 rounded-full bg-[#4996b2]">
                                <svg viewBox="0 0 10 10" fill="none" stroke="#fff" className="w-2.5 h-2.5"><path d="M0.500 0.500h9v9h-9zM2.500 5h5M5 2.500v5" /></svg>
                                门店名称
                                <svg viewBox="0 0 10 10" stroke="#fff" strokeWidth="2" className="w-2.5 h-2.5 ml-auto"><path d="M0 1h10M0 5h6M0 9h3" /></svg>
                            </span>
                        </Shelf>
                        <Shelf
                            label="行"
                            icon={
                                <svg viewBox="0 0 12 12" stroke="currentColor" strokeWidth="1.500" className="w-3 h-3">
                                    <path d="M0 2h2M0 6h2M0 10h2M3 2h9M3 6h9M3 10h9" />
                                </svg>
                            }
                        >
                            <span className="w-[215px] h-[29px] flex items-center pl-[15px] rounded-full bg-[#00b180]">总和(GMV)</span>
                        </Shelf>
                        <div className="flex-1 min-h-0 flex gap-2">
                            <Worksheet />
                            <Legend />
                        </div>
                    </div>
                </div>
            </div>
            <SheetTabs />
            <StatusBar />
            <Taskbar />
            <ContextMenu />
            <Annotations />
        </div>
    );
}
